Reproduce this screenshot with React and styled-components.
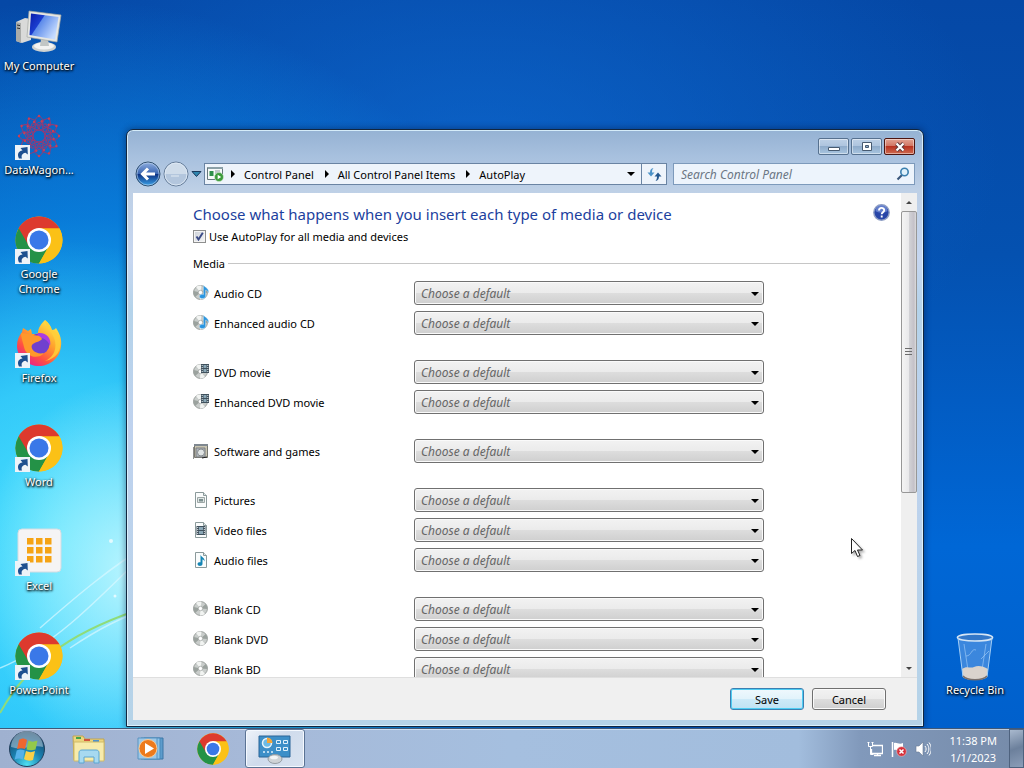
import { useState } from 'react'
import styled, { createGlobalStyle, css } from 'styled-components'

const GlobalStyle = createGlobalStyle`
    * {
        box-sizing: border-box;
    }
    body {
        margin: 0;
        font-family: 'Noto Sans', 'Open Sans', sans-serif;
        font-size: 11px;
        line-height: 15px;
        color: #000;
    }
    button, input, select {
        font: inherit;
        color: inherit;
        margin: 0;
    }
`

const Screen = styled.div`
    display: flex;
    flex-direction: column;
    height: 100vh;
    overflow: hidden;
`
const Desktop = styled.main`
    position: relative;
    flex: 1;
    min-height: 0;
    display: flex;
    justify-content: space-between;
    overflow: hidden;
    background:
        radial-gradient(ellipse 150px 190px at 130px 570px, rgba(205, 250, 255, 0.85), transparent),
        radial-gradient(ellipse 260px 300px at 60px 540px, rgba(80, 228, 255, 0.9), transparent),
        radial-gradient(ellipse 560px 640px at 80px 640px, #22c0fb 0%, #1cb4f4 40%, rgba(10, 140, 232, 0.7) 66%, transparent 100%),
        radial-gradient(ellipse 520px 300px at 480px 160px, rgba(14, 106, 210, 0.7), transparent),
        linear-gradient(180deg, #0548a6 0%, #0451b0 35%, #0067d6 75%, #0060cc 100%);
`
const Swirls = styled.svg`
    position: absolute;
    left: 0;
    bottom: 0;
`
const IconColumn = styled.nav`
    position: relative;
    display: flex;
    flex-direction: column;
    justify-content: ${(props) => props.$atEnd ? 'flex-end' : 'flex-start'};
    width: 78px;
    margin-right: ${(props) => props.$atEnd ? '10px' : '0'};
    padding-top: 8px;
`
const Shortcut = styled.a`
    display: flex;
    flex-direction: column;
    align-items: center;
    flex: none;
    height: ${(props) => props.$last ? '96px' : '104px'};
    color: #fff;
    text-align: center;
    text-decoration: none;
    text-shadow: 1px 1px 2px #000, 0 1px 3px #000;
`
const ShortcutPicture = styled.span`
    position: relative;
    height: 50px;
    svg {
        display: block;
    }
`
const ArrowBadge = styled.svg`
    position: absolute;
    left: 0;
    bottom: 2px;
`

const Window = styled.section`
    position: absolute;
    top: 129px;
    right: 100px;
    bottom: 1px;
    left: 126px;
    display: flex;
    flex-direction: column;
    padding: 0 6px 6px;
    border: 1px solid #12263f;
    border-radius: 7px 7px 0 0;
    background: linear-gradient(180deg, #95b2d3 0, #a7c0de 26px, #bed0e6 60px, #c6d6f0 130px, #b4d3ea 180px, #bfd2ee 300px, #b5d3e8 100%);
    box-shadow: inset 0 0 0 1px rgba(225, 246, 255, 0.85), 0 0 6px 1px rgba(0, 20, 60, 0.4);
`
const CaptionBar = styled.header`
    display: flex;
    justify-content: flex-end;
    align-items: flex-end;
    gap: 2px;
    height: 25px;
    padding-right: 2px;
`
const CaptionButton = styled.button`
    display: flex;
    align-items: center;
    justify-content: center;
    width: 31px;
    height: 17px;
    padding: 0;
    border: 1px solid #56718f;
    border-radius: 2px;
    box-shadow: inset 0 0 0 1px rgba(255, 255, 255, 0.45);
    background: linear-gradient(180deg, #bdd0e6 0%, #adc4de 48%, #8faccb 50%, #a9c5e0 100%);
    ${(props) => props.$close && css`
        border-color: #4c1511;
        background: linear-gradient(180deg, #e2a393 0%, #d17462 48%, #b83221 50%, #cf6b50 100%);
    `}
`
const NavBar = styled.div`
    display: flex;
    align-items: center;
    height: 38px;
    padding: 0 2px;
`
const HistoryButton = styled.button`
    display: flex;
    padding: 0;
    border: none;
    background: none;
    & + & {
        margin-left: 2px;
    }
`
const AddressBar = styled.div`
    display: flex;
    align-items: center;
    flex: 1;
    height: 22px;
    margin-left: 2px;
    border: 1px solid #6a84a3;
    background: #eef4fb;
`
const Crumb = styled.a`
    padding: 0 11px 0 9px;
    color: #000;
    text-decoration: none;
    white-space: nowrap;
`
const CrumbIcon = styled.span`
    display: flex;
    margin: 0 7px 0 2px;
`
const AddressButton = styled.button`
    display: flex;
    align-items: center;
    justify-content: center;
    width: ${(props) => props.$divided ? '25px' : '20px'};
    height: 20px;
    padding: 0;
    border: none;
    border-left: ${(props) => props.$divided ? '1px solid #6a84a3' : 'none'};
    margin-left: ${(props) => props.$divided ? '0' : 'auto'};
    background: none;
`
const SearchBox = styled.form`
    display: flex;
    align-items: center;
    width: 242px;
    height: 22px;
    margin-left: 6px;
    padding: 0 4px 0 7px;
    border: 1px solid #7d9abb;
    background: #edf4fc;
    input {
        flex: 1;
        min-width: 0;
        padding: 0;
        border: none;
        outline: none;
        background: none;
        font-size: 12px;
    }
    input::placeholder {
        color: #6b7684;
        font-style: italic;
        opacity: 1;
    }
`

const Body = styled.div`
    display: flex;
    flex: 1;
    min-height: 0;
    background: #fff;
`
const Page = styled.form`
    flex: 1;
    min-width: 0;
    overflow: hidden;
    padding: 9px 11px 0 60px;
`
const PageHeader = styled.div`
    display: flex;
    justify-content: space-between;
    align-items: flex-start;
`
const Title = styled.h1`
    margin: 0;
    font-size: 15px;
    font-weight: 400;
    line-height: 24px;
    color: #1c3f9e;
`
const HelpButton = styled.button`
    display: flex;
    margin-top: 2px;
    padding: 0;
    border: none;
    background: none;
`
const CheckLabel = styled.label`
    display: flex;
    align-items: center;
    gap: 3px;
    margin-top: 2px;
    height: 16px;
`
const CheckBox = styled.input`
    appearance: none;
    width: 13px;
    height: 13px;
    border: 1px solid #8e8f8f;
    background: linear-gradient(135deg, #cbd0d8, #f6f6f6);
    box-shadow: inset 0 0 0 1px #f4f4f4;
    &:checked {
        background: url("data:image/svg+xml,%3Csvg xmlns='http://www.w3.org/2000/svg' viewBox='0 0 11 11'%3E%3Cpath d='M2.5 5.5l2 3L8.8 1.8' fill='none' stroke='%233a4a86' stroke-width='1.9'/%3E%3C/svg%3E"), linear-gradient(135deg, #cbd0d8, #f6f6f6);
    }
`
const Legend = styled.h2`
    display: flex;
    align-items: center;
    gap: 3px;
    margin: 12px 0 10px;
    font-size: 11px;
    font-weight: 400;
    &::after {
        content: '';
        flex: 1;
        height: 1px;
        background: #c6c6c6;
    }
`
const Group = styled.div`
    display: flex;
    flex-direction: column;
    gap: 6px;
    margin-bottom: 25px;
`
const MediaRow = styled.div`
    display: grid;
    grid-template-columns: 221px minmax(0, 350px);
    align-items: center;
    height: 24px;
`
const MediaLabel = styled.label`
    display: flex;
    align-items: center;
    gap: 5px;
`
const SelectBox = styled.div`
    position: relative;
    &::after {
        content: '';
        position: absolute;
        top: 11px;
        right: 5px;
        border: 4px solid transparent;
        border-top-color: #000;
        border-bottom: none;
        pointer-events: none;
    }
`
const Select = styled.select`
    appearance: none;
    display: block;
    width: 100%;
    height: 24px;
    padding: 0 20px 0 6px;
    border: 1px solid #707070;
    border-radius: 3px;
    background: linear-gradient(180deg, #f2f2f2 0%, #ebebeb 49%, #dddddd 51%, #cfcfcf 100%);
    box-shadow: inset 0 0 0 1px #fafafa;
    color: #666;
    font-size: 12px;
    font-style: italic;
`

const ScrollBar = styled.div`
    display: flex;
    flex-direction: column;
    width: 16px;
    background: #efefef;
`
const ScrollButton = styled.button`
    display: flex;
    align-items: center;
    justify-content: center;
    height: 18px;
    padding: 0;
    border: none;
    background: none;
`
const ScrollTrack = styled.div`
    flex: 1;
`
const ScrollThumb = styled.div`
    display: flex;
    align-items: center;
    justify-content: center;
    height: 63%;
    border: 1px solid #979797;
    border-radius: 2px;
    background: linear-gradient(90deg, #f4f4f4 0%, #e9e9eb 48%, #d2d2d6 52%, #c4c1c8 85%, #dcdcdc 100%);
`
const Footer = styled.footer`
    display: flex;
    justify-content: flex-end;
    gap: 8px;
    padding: 10px 31px 10px 0;
    border-top: 1px solid #dfdfdf;
    background: #f0f0f0;
`
const PushButton = styled.button`
    width: 74px;
    height: 22px;
    padding: 0;
    border: 1px solid #707070;
    border-radius: 3px;
    background: linear-gradient(180deg, #f2f2f2 0%, #ebebeb 49%, #dddddd 51%, #cfcfcf 100%);
    box-shadow: inset 0 0 0 1px #fafafa;
    ${(props) => props.$primary && css`
        border-color: #3c7fb1;
        background: linear-gradient(180deg, #eff8fd 0%, #e2f3fb 49%, #cdeaf8 51%, #c0e2f3 100%);
        box-shadow: inset 0 0 0 1px #4fcdf3;
    `}
`

const TaskBar = styled.footer`
    display: flex;
    align-items: center;
    height: 40px;
    border-top: 1px solid #3f5878;
    background: linear-gradient(90deg, #9fb1d0 0%, #a6b9d8 24%, #a5bfdf 50%, #a2bddd 78%, #8199bb 84%, #768ba9 100%);
    box-shadow: inset 0 1px 0 rgba(235, 245, 255, 0.6);
`
const StartButton = styled.button`
    display: flex;
    padding: 0;
    margin-left: 8px;
    border: none;
    background: none;
`
const TaskButtons = styled.div`
    display: flex;
    gap: 2px;
    margin-left: 13px;
    flex: 1;
`
const TaskButton = styled.button`
    display: flex;
    align-items: center;
    justify-content: center;
    width: 60px;
    height: 39px;
    padding: 0;
    border: 1px solid transparent;
    border-radius: 3px;
    background: none;
    ${(props) => props.$active && css`
        border-color: #5b7394;
        background: linear-gradient(135deg, #eef3fa 0%, #cfdbec 45%, #d9e3f0 100%);
        box-shadow: inset 0 0 0 1px #f5f9ff;
    `}
`
const Tray = styled.div`
    display: flex;
    align-items: center;
    gap: 8px;
`
const Clock = styled.time`
    margin: 0 4px 0 10px;
    text-align: center;
    line-height: 17px;
    color: #fff;
`
const ShowDesktop = styled.button`
    width: 15px;
    height: 39px;
    padding: 0;
    border: 1px solid #4e627e;
    background: linear-gradient(160deg, #a9b9ce 0%, #6c809c 50%, #8b9db8 100%);
`
const Pointer = styled.svg`
    position: absolute;
    left: 850px;
    top: 537px;
    pointer-events: none;
    filter: drop-shadow(2px 2px 1px rgba(0, 0, 0, 0.3));
`

function ShortcutArrow(){
    return (
        <ArrowBadge width="15" height="15" viewBox="0 0 15 15">
            <path d="M0 0h15v15H0z" fill="#eef3f8" />
            <path d="M4 13.500C2 9.500 3 6 7.500 5.500L5.500 3 12.500 2l.3 7.500-2.300-1.800C7 8.500 6 10.500 7 13.500z" fill="#1d4f8f" />
        </ArrowBadge>
    )
}

function ChromeIcon({ size }){
    return (
        <svg width={size} height={size} viewBox="0 0 48 48">
            <circle cx="24" cy="24" r="23.500" fill="#fbc116" />
            <path d="M24 24L3.700 12.200A23.500 23.500 0 0 0 24 47.500L34 29.800z" fill="#249247" />
            <path d="M24 12.300h20.400A23.500 23.500 0 0 1 24 47.500L34.200 29.800z" fill="#fbc116" />
            <path d="M3.700 12.200L14 30L24 12.300H44.400A23.500 23.500 0 0 0 3.700 12.200z" fill="#dd3a2e" />
            <circle cx="24" cy="24" r="12" fill="#fff" />
            <circle cx="24" cy="24" r="9.500" fill="#3a78e8" />
        </svg>
    )
}

function ComputerIcon(){
    return (
        <svg width="48" height="48" viewBox="0 0 48 48">
            <defs>
                <linearGradient id="monitor" x1="0" x2="1" y2="0.600">
                    <stop offset="0" stopColor="#0a1ba8" />
                    <stop offset="0.400" stopColor="#1b3ed0" />
                    <stop offset="0.430" stopColor="#5d8bea" />
                    <stop offset="1" stopColor="#c6dcff" />
                </linearGradient>
            </defs>
            <path d="M1 14l9-4 6 1v21l-9 3-6-2z" fill="#d9dad9" />
            <path d="M1 14l5 1v20l-5-2z" fill="#a9aba9" />
            <path d="M2 17l3 .6M2 20l3 .6" stroke="#333" />
            <ellipse cx="29" cy="39" rx="12" ry="5" fill="#cfd2d1" />
            <ellipse cx="29" cy="38" rx="10" ry="3.500" fill="#f3f3f2" />
            <path d="M26 31h7l1 7h-9z" fill="#c2c6c5" />
            <path d="M14 3l32 4-4 27-30-5z" fill="#e6e7e3" stroke="#a4a7a4" strokeWidth=".7" />
            <path d="M16 5.500L43.500 9 40 31.500 14.500 27z" fill="url(#monitor)" />
        </svg>
    )
}

function DataWagonIcon(){
    const angles = [0, 30, 60, 90, 120, 150, 180, 210, 240, 270, 300, 330]
    return (
        <svg width="48" height="48" viewBox="0 0 48 48" fill="none" stroke="#8f3c78" strokeWidth="1">
            {angles.map((angle) => (
                <g key={angle} transform={`rotate(${angle} 24 24)`}>
                    <path d="M24 16L19 9L24 3L29 9zM18 15L24 10L30 15M21 19l3-3 3 3" />
                    <circle cx="24" cy="4" r="1.200" fill="#c83f55" stroke="none" />
                    <circle cx="19" cy="10" r="1.200" fill="#c83f55" stroke="none" />
                </g>
            ))}
            <circle cx="24" cy="24" r="6" />
            <circle cx="24" cy="24" r="9" strokeDasharray="3 2" />
        </svg>
    )
}

function FirefoxIcon(){
    return (
        <svg width="48" height="48" viewBox="0 0 48 48">
            <defs>
                <linearGradient id="flame" x1="0.900" y1="0.100" x2="0.300" y2="1">
                    <stop offset="0" stopColor="#ffe94a" />
                    <stop offset="0.400" stopColor="#ffa42c" />
                    <stop offset="0.750" stopColor="#ff4f43" />
                    <stop offset="1" stopColor="#e8208c" />
                </linearGradient>
            </defs>
            <path d="M30 0c4 3 6 6 7 10 2 0 3-1 4-2 4 6 6 12 5 18-1 12-11 20-22 20S2 38 2 26c0-6 2-10 5-14l1-4 5 3 3-2 1 5c3 0 5 0 6-1 0-5 3-9 7-13z" fill="url(#flame)" />
            <circle cx="24" cy="24" r="10.500" fill="#7040cf" />
            <path d="M23 13c8-1 14 5 12 13-2-6-7-9-13-8z" fill="#aa3de0" />
            <path d="M6 13l8 1c5 2 11 0 13 5-2 3-8 3-10 6-2 4 4 10 12 8-6 7-18 4-20-6-1-5-3-9-3-14z" fill="#ff982b" />
            <path d="M30 0c0 8 9 13 10 21 2 10-3 17-10 20 11-2 17-11 15-20-1-8-4-10-8-10-1-4-3-7-7-11z" fill="#ffcf3a" opacity=".85" />
        </svg>
    )
}

function GridAppIcon(){
    const cells = [12, 21, 30]
    return (
        <svg width="48" height="48" viewBox="0 0 48 48">
            <rect x="3" y="1" width="43" height="43" rx="4" fill="#f5f4f5" stroke="#d5dce2" />
            {cells.map((y) => cells.map((x) => (
                <rect key={`${x}-${y}`} x={x} y={y - 2} width="6.500" height="6.500" fill="#f5a314" />
            )))}
        </svg>
    )
}

function RecycleBinIcon(){
    return (
        <svg width="48" height="50" viewBox="0 0 48 50">
            <path d="M7 5h34l-5 40c-3 4-21 4-24 0z" fill="#4f93e2" opacity=".75" />
            <path d="M13 12l4 26M35 12l-4 26M15 24c6 0 5-8 10-6M30 27l8-8" stroke="#a9d1f8" opacity=".6" fill="none" />
            <path d="M11 37c5-4 8 0 12-2s9-1 14 2l-1 8c-3 4-21 4-24 0z" fill="#d9d3cd" />
            <ellipse cx="24" cy="5.500" rx="17.500" ry="3.500" fill="#3277c8" stroke="#d4e5f5" strokeWidth="1.700" />
            <path d="M7 6l5 39M41 6l-5 39" stroke="#a4cef5" />
            <path d="M12 44c4 5 20 5 24 0" fill="none" stroke="#776f6c" strokeWidth="1.500" />
        </svg>
    )
}

function Disc(){
    return (
        <>
            <circle cx="7.500" cy="7.500" r="7" fill="#c9cdcb" stroke="#8d928f" strokeWidth=".8" />
            <path d="M7.500 7.500L3 2A7 7 0 0 1 8.500.700zM7.500 7.500L12 13A7 7 0 0 1 7 14.400z" fill="#f2f4f2" />
            <path d="M7.500 7.500L.7 6A7 7 0 0 0 2 12zM7.500 7.500L14.300 8A7 7 0 0 0 12.800 3z" fill="#9ba29e" />
            <circle cx="7.500" cy="7.500" r="2.200" fill="#fff" stroke="#9a9e9b" strokeWidth=".7" />
        </>
    )
}

function Film({ x, y, w, h }){
    return (
        <g transform={`translate(${x} ${y})`}>
            <rect width={w} height={h} fill="#40515d" />
            <path d={`M2.500 1h${w - 5}v${h / 2 - 1.5}h-${w - 5}zM2.500 ${h / 2 + 0.5}h${w - 5}v${h / 2 - 1.5}h-${w - 5}z`} fill="#8aa7b6" />
            <path d={`M1.200 1v${h - 1}M${w - 1.2} 1v${h - 1}`} stroke="#e4ebee" strokeDasharray="1 1" />
        </g>
    )
}

function Sheet(){
    return (
        <>
            <path d="M2.500.5h8l3 3v12h-11z" fill="#fafcfc" stroke="#8b9a9b" />
            <path d="M10.500.5v3h3" fill="#dfe6e7" stroke="#8b9a9b" />
        </>
    )
}

function MediaIcon({ kind }){
    return (
        <svg width="16" height="16" viewBox="0 0 16 16">
            {(kind === 'audioDisc' || kind === 'movieDisc' || kind === 'disc') && <Disc />}
            {kind === 'audioDisc' && <path d="M10.500 0c0 2 6 3 5 8-.5-2-2-3-3-3v6.500c0 2.500-6 3-6 0 0-1.700 2-2.500 4-2z" fill="#2a95e0" stroke="#bfe2f8" strokeWidth=".4" />}
            {kind === 'movieDisc' && <Film x={8} y={0} w={8} h={9} />}
            {kind === 'software' && <>
                <path d="M1.500 1.500h13v13h-13z" fill="#c9c5b2" stroke="#77776f" />
                <path d="M1 1h14v2H1z" fill="#7f8890" />
                <path d="M3 5h9v9H3z" fill="#b0b7bd" stroke="#7c7f80" />
                <circle cx="8" cy="9.500" r="3.500" fill="#e0e4e4" stroke="#858a8c" />
                <path d="M0 4v12M9 15l5-1" stroke="#222" />
            </>}
            {(kind === 'picture' || kind === 'video' || kind === 'audio') && <Sheet />}
            {kind === 'picture' && <><path d="M4.500 5.500h7v5h-7z" fill="#dfe5e4" stroke="#9ca7a6" /><path d="M6 7h4v2.500H6z" fill="#7c8f8f" /></>}
            {kind === 'video' && <Film x={3.5} y={4} w={9} h={9} />}
            {kind === 'audio' && <path d="M7.500 2.500c0 2 5 3.500 4 7-.5-1.500-1.500-2-2-2V12c0 2.500-5 2.500-5 0 0-1.500 1.500-2 3-1.700z" fill="#1585b4" />}
        </svg>
    )
}

function BackIcon(){
    return (
        <svg width="26" height="26" viewBox="0 0 26 26">
            <defs>
                <linearGradient id="orb" x2="0" y2="1">
                    <stop offset="0" stopColor="#90afe0" />
                    <stop offset="0.480" stopColor="#3c67b2" />
                    <stop offset="0.500" stopColor="#0c2f80" />
                    <stop offset="1" stopColor="#3ba4ea" />
                </linearGradient>
            </defs>
            <circle cx="13" cy="13" r="12" fill="url(#orb)" stroke="#31506f" />
            <circle cx="13" cy="13" r="11" fill="none" stroke="#bfd6ef" strokeOpacity=".6" />
            <path d="M20 13H8M13 7.500L7.500 13l5.500 5.500" fill="none" stroke="#fff" strokeWidth="3" />
        </svg>
    )
}

function ForwardIcon(){
    return (
        <svg width="26" height="26" viewBox="0 0 26 26">
            <circle cx="13" cy="13" r="12" fill="#b3c6dd" stroke="#667d99" />
            <path d="M2 13a11 11 0 0 1 22 0z" fill="#cfdcea" />
            <circle cx="13" cy="13" r="11" fill="none" stroke="#e4edf7" strokeOpacity=".8" />
            <path d="M8 15h8" stroke="#cbd9e8" strokeWidth="2" />
        </svg>
    )
}

function SmallArrow({ d, fill = '#000', w = 8, h = 8 }){
    return (
        <svg width={w} height={h} viewBox={`0 0 ${w} ${h}`}>
            <path d={d} fill={fill} />
        </svg>
    )
}

function AutoPlayIcon(){
    return (
        <svg width="17" height="16" viewBox="0 0 17 16">
            <path d="M.5 1.500h15v12H.5z" fill="#f7fafa" stroke="#67787d" />
            <path d="M1 1h15v2H1z" fill="#8ba0a7" />
            <path d="M2.500 5h4v5h-4z" fill="#2f8f4c" />
            <path d="M8 5h5M8 7h5" stroke="#8a999e" />
            <circle cx="12" cy="11" r="4.500" fill="#3d9c3c" stroke="#d9efd6" strokeWidth=".6" />
            <path d="M10.700 8.700l3.500 2.300-3.500 2.300z" fill="#fff" />
        </svg>
    )
}

function StartIcon(){
    return (
        <svg width="38" height="38" viewBox="0 0 38 38">
            <defs>
                <radialGradient id="start" cy="0.950" r="0.900">
                    <stop offset="0" stopColor="#4fe0f2" />
                    <stop offset="0.500" stopColor="#1a7fae" />
                    <stop offset="1" stopColor="#174468" />
                </radialGradient>
            </defs>
            <circle cx="19" cy="19" r="17.500" fill="url(#start)" stroke="#223f5c" />
            <path d="M3 17a16 16 0 0 1 32 0c-10-3-20 4-32 0z" fill="#c6d7e4" opacity=".5" />
            <path d="M11 10c3-2 5-2 8 0l-2 9c-3-1-5-1-8 0z" fill="#ee6730" />
            <path d="M20.500 10.500c3 1.500 5 1.500 9 0l-2 9c-3 1-6 1-9 0z" fill="#93c94a" />
            <path d="M8.700 20.500c3-1.500 5-1 8 0l-2 9c-3-1.500-5-1-8 0z" fill="#55b1ea" />
            <path d="M18 21c3 1.500 6 1.500 9 0l-2 9c-3 1-6 1-9-1z" fill="#fbd048" />
        </svg>
    )
}

function ExplorerIcon(){
    return (
        <svg width="34" height="30" viewBox="0 0 34 30">
            <path d="M1 2h10l2 3h19v21H2z" fill="#ecd57e" stroke="#bfa552" />
            <path d="M4 3h5v2H4z" fill="#44a44a" />
            <path d="M12 5h6v2h-6z" fill="#d3553b" />
            <path d="M21 6h6v2h-6z" fill="#4f92cc" />
            <path d="M2 8h30v19H2z" fill="#f7ebab" stroke="#d0bb68" />
            <path d="M7 29V19c0-2 1-3 3-3h14c2 0 3 1 3 3v10h-5v-6H12v6z" fill="#a7d9f0" stroke="#5ba6d3" />
        </svg>
    )
}

function PlayerIcon(){
    return (
        <svg width="28" height="26" viewBox="0 0 28 26">
            <path d="M7 2h19v21H7z" fill="#5d9ccc" stroke="#3c76a6" />
            <path d="M4 2h19v21H4z" fill="#8cc3e8" stroke="#4b89ba" />
            <path d="M1 2h19v21H1z" fill="#9dc8e8" stroke="#5a94c0" />
            <circle cx="11" cy="12.500" r="9" fill="#ed7a1c" stroke="#f8cc98" />
            <path d="M8 7l9 5.500L8 18z" fill="#fff" />
        </svg>
    )
}

function PanelIcon(){
    return (
        <svg width="34" height="30" viewBox="0 0 34 30">
            <path d="M1 2h31v21H1z" fill="#3d8fc8" stroke="#2a6597" />
            <circle cx="9" cy="9" r="4.500" fill="#6cbbe6" stroke="#e8f4fb" strokeWidth="1.500" />
            <path d="M9 9V3.500A5.500 5.500 0 0 1 14.500 9z" fill="#f4a63a" />
            <path d="M18.500 6.500h4v3h-4zM25.500 6.500h4v3h-4zM18.500 13.500h4v3h-4zM25.500 13.500h4v3h-4z" fill="none" stroke="#e1f1fa" />
            <path d="M5 18h2M9 18h2M13 18h2" stroke="#dff0fa" strokeWidth="1.500" />
            <ellipse cx="17" cy="25" rx="7" ry="4.500" fill="#cfd3d6" stroke="#959ca2" />
            <ellipse cx="16" cy="23.500" rx="4" ry="1.800" fill="#f4f5f6" />
        </svg>
    )
}

function TrayIcons(){
    return (
        <>
            <svg width="16" height="16" viewBox="0 0 16 16" fill="none" stroke="#fff">
                <path d="M6 4.500h9.500v8H4.500V8M7 14.500h7M10.500 12v2" strokeWidth="1.300" />
                <path d="M1.500 1v4.500h4V1M.5 1.500h2M4.500 1.500h2M3.500 5v8.500h3" />
            </svg>
            <svg width="16" height="16" viewBox="0 0 16 16">
                <path d="M1.500 1v15" stroke="#fff" strokeWidth="1.500" />
                <path d="M3 2c3-1 5 2 9 0v7c-4 2-6-1-9 0z" fill="#fff" />
                <circle cx="10.500" cy="10.500" r="4.800" fill="#d5303a" stroke="#f3c1c1" strokeWidth=".6" />
                <path d="M8.500 8.500l4 4M12.500 8.500l-4 4" stroke="#fff" strokeWidth="1.500" />
            </svg>
            <svg width="16" height="16" viewBox="0 0 16 16">
                <path d="M1 5h3l4-4v14l-4-4H1z" fill="#fff" stroke="#687b94" strokeWidth=".6" />
                <path d="M10 5c1.500 2 1.500 4 0 6M12 3c2.500 3 2.500 7 0 10M14 1.500c3 4 3 9 0 13" fill="none" stroke="#fff" />
            </svg>
        </>
    )
}

const shortcuts = [
    { label: 'My Computer', icon: <ComputerIcon /> },
    { label: 'DataWagon...', icon: <DataWagonIcon />, linked: true },
    { label: 'Google Chrome', icon: <ChromeIcon size={48} />, linked: true },
    { label: 'Firefox', icon: <FirefoxIcon />, linked: true },
    { label: 'Word', icon: <ChromeIcon size={48} />, linked: true },
    { label: 'Excel', icon: <GridAppIcon />, linked: true },
    { label: 'PowerPoint', icon: <ChromeIcon size={48} />, linked: true },
]

const mediaGroups = [
    [['Audio CD', 'audioDisc'], ['Enhanced audio CD', 'audioDisc']],
    [['DVD movie', 'movieDisc'], ['Enhanced DVD movie', 'movieDisc']],
    [['Software and games', 'software']],
    [['Pictures', 'picture'], ['Video files', 'video'], ['Audio files', 'audio']],
    [['Blank CD', 'disc'], ['Blank DVD', 'disc'], ['Blank BD', 'disc']],
]

function DesktopShortcut({ label, icon, linked, last }){
    return (
        <Shortcut href="#" $last={last}>
            <ShortcutPicture>
                {icon}
                {linked && <ShortcutArrow />}
            </ShortcutPicture>
            {label}
        </Shortcut>
    )
}

function AutoPlayWindow(){
    const [enabled, setEnabled] = useState(true)

    return (
        <Window aria-label="AutoPlay">
            <CaptionBar>
                <CaptionButton aria-label="Minimize">
                    <svg width="12" height="11" viewBox="0 0 12 11"><path d="M.5 6.500h11v3H.5z" fill="#fff" stroke="#475a70" /></svg>
                </CaptionButton>
                <CaptionButton aria-label="Maximize">
                    <svg width="12" height="10" viewBox="0 0 12 10"><path d="M1.500.5h9v8h-9z" fill="#fff" stroke="#475a70" /><path d="M4.500 3.500h3v2h-3z" fill="#8faccb" stroke="#475a70" /></svg>
                </CaptionButton>
                <CaptionButton $close aria-label="Close">
                    <svg width="12" height="10" viewBox="0 0 12 10"><path d="M2.500 1.500l7 7M9.500 1.500l-7 7" stroke="#5d3a3c" strokeWidth="4" /><path d="M2.500 1.500l7 7M9.500 1.500l-7 7" stroke="#fff" strokeWidth="2.200" /></svg>
                </CaptionButton>
            </CaptionBar>
            <NavBar>
                <HistoryButton aria-label="Back"><BackIcon /></HistoryButton>
                <HistoryButton aria-label="Forward"><ForwardIcon /></HistoryButton>
                <HistoryButton aria-label="Recent pages">
                    <svg width="11" height="8" viewBox="0 0 11 8"><path d="M1 1.500h9L5.500 6.500z" fill="#2f86b0" stroke="#1b3a5c" /></svg>
                </HistoryButton>
                <AddressBar>
                    <CrumbIcon><AutoPlayIcon /></CrumbIcon>
                    <SmallArrow d="M0 0l4 4-4 4z" w={4} />
                    <Crumb href="#">Control Panel</Crumb>
                    <SmallArrow d="M0 0l4 4-4 4z" w={4} />
                    <Crumb href="#">All Control Panel Items</Crumb>
                    <SmallArrow d="M0 0l4 4-4 4z" w={4} />
                    <Crumb href="#">AutoPlay</Crumb>
                    <AddressButton aria-label="Previous locations"><SmallArrow d="M0 2h8L4 6z" /></AddressButton>
                    <AddressButton $divided aria-label="Refresh">
                        <svg width="15" height="13" viewBox="0 0 15 13">
                            <path d="M6.500 0C4 .5 3 2 3 4.500H.5L4 8.500l3.500-4H5C5 2.500 5.300 1.500 6.500 0z" fill="#4d93c8" />
                            <path d="M8.500 13c2.500-.5 3.500-2 3.500-4.500h2.500L11 4.500l-3.500 4H10c0 2-.3 3-1.500 4.500z" fill="#24588f" />
                        </svg>
                    </AddressButton>
                </AddressBar>
                <SearchBox role="search">
                    <input type="search" aria-label="Search Control Panel" placeholder="Search Control Panel" />
                    <svg width="14" height="14" viewBox="0 0 14 14" fill="none">
                        <path d="M6 8L1.500 12.500" stroke="#39567a" strokeWidth="2.200" />
                        <circle cx="8.500" cy="5" r="3.700" stroke="#3b7fae" strokeWidth="1.600" fill="#dff1fb" />
                    </svg>
                </SearchBox>
            </NavBar>
            <Body>
                <Page>
                    <PageHeader>
                        <Title>Choose what happens when you insert each type of media or device</Title>
                        <HelpButton type="button" aria-label="Help">
                            <svg width="17" height="17" viewBox="0 0 17 17">
                                <circle cx="8.500" cy="8.500" r="7.700" fill="#2846a8" stroke="#8f9fc4" strokeWidth="1.400" />
                                <path d="M2.500 7a6 6 0 0 1 12 0c-3 2-9 2-12 0z" fill="#7c96dc" opacity=".7" />
                                <path d="M6 6.500c0-3.500 5.200-3.300 5.200-.3 0 2-2.500 2-2.500 4M8.700 11.500v2" fill="none" stroke="#fff" strokeWidth="1.900" />
                            </svg>
                        </HelpButton>
                    </PageHeader>
                    <CheckLabel>
                        <CheckBox type="checkbox" checked={enabled} onChange={() => setEnabled(!enabled)} />
                        Use AutoPlay for all media and devices
                    </CheckLabel>
                    <Legend>Media</Legend>
                    {mediaGroups.map((group) => (
                        <Group key={group[0][0]}>
                            {group.map(([name, kind]) => (
                                <MediaRow key={name}>
                                    <MediaLabel htmlFor={name}><MediaIcon kind={kind} />{name}</MediaLabel>
                                    <SelectBox>
                                        <Select id={name}>
                                            <option>Choose a default</option>
                                        </Select>
                                    </SelectBox>
                                </MediaRow>
                            ))}
                        </Group>
                    ))}
                </Page>
                <ScrollBar>
                    <ScrollButton aria-label="Scroll up"><SmallArrow d="M1 6h6L4 3z" fill="#444" /></ScrollButton>
                    <ScrollTrack>
                        <ScrollThumb>
                            <svg width="8" height="8" viewBox="0 0 8 8"><path d="M0 .5h7M0 3.500h7M0 6.500h7" stroke="#6c6c6c" /></svg>
                        </ScrollThumb>
                    </ScrollTrack>
                    <ScrollButton aria-label="Scroll down"><SmallArrow d="M1 3h6L4 6z" fill="#444" /></ScrollButton>
                </ScrollBar>
            </Body>
            <Footer>
                <PushButton $primary>Save</PushButton>
                <PushButton>Cancel</PushButton>
            </Footer>
        </Window>
    )
}

function App(){
    return (
        <Screen>
            <GlobalStyle />
            <Desktop>
                <Swirls width="400" height="230" viewBox="0 0 400 230" fill="none">
                    <path d="M0 170C50 150 90 110 150 50M40 130C80 95 110 70 150 45M70 150C100 130 120 120 150 110" stroke="#d8f8ff" strokeWidth="1.500" opacity=".7" />
                    <path d="M0 215C30 160 80 130 150 108" stroke="#8fdc7a" strokeWidth="2" />
                    <circle cx="111" cy="43" r="2" fill="#fff" opacity=".7" />
                    <circle cx="115" cy="98" r="1.500" fill="#fff" opacity=".7" />
                </Swirls>
                <IconColumn>
                    {shortcuts.map((item) => <DesktopShortcut key={item.label} {...item} />)}
                </IconColumn>
                <IconColumn $atEnd>
                    <DesktopShortcut label="Recycle Bin" icon={<RecycleBinIcon />} last />
                </IconColumn>
                <AutoPlayWindow />
                <Pointer width="14" height="21" viewBox="0 0 14 21">
                    <path d="M1.500 1.500v15l3.500-3 2.500 6 2.500-1-2.500-5.500h5z" fill="#fff" stroke="#222" />
                </Pointer>
            </Desktop>
            <TaskBar>
                <StartButton aria-label="Start"><StartIcon /></StartButton>
                <TaskButtons>
                    <TaskButton aria-label="Explorer"><ExplorerIcon /></TaskButton>
                    <TaskButton aria-label="Media Player"><PlayerIcon /></TaskButton>
                    <TaskButton aria-label="Chrome"><ChromeIcon size={32} /></TaskButton>
                    <TaskButton aria-label="AutoPlay" $active><PanelIcon /></TaskButton>
                </TaskButtons>
                <Tray>
                    <TrayIcons />
                    <Clock>11:38 PM<br />1/1/2023</Clock>
                    <ShowDesktop aria-label="Show desktop" />
                </Tray>
            </TaskBar>
        </Screen>
    )
}
export default App
